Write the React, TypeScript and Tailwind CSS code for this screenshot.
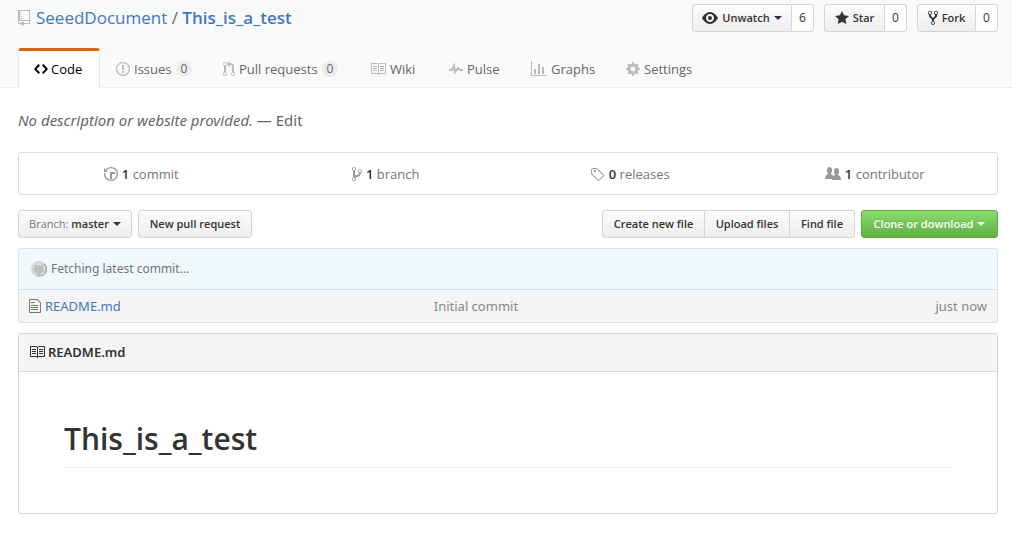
import type { ReactNode } from "react";

const ICONS = {
  repo: { w: 12, d: "M4 9H3V8h1v1zm0-3H3v1h1V6zm0-2H3v1h1V4zm0-2H3v1h1V2zm8-1v12c0 .55-.45 1-1 1H6v2l-1.5-1.5L3 16v-2H1c-.55 0-1-.45-1-1V1c0-.55.45-1 1-1h10c.55 0 1 .45 1 1zm-1 10H1v2h2v-1h3v1h5v-2zm0-10H2v9h9V1z" },
  code: { w: 14, d: "M9.5 3L8 4.5 11.5 8 8 11.5 9.5 13 14 8 9.5 3zm-5 0L0 8l4.5 5L6 11.5 2.5 8 6 4.5 4.5 3z" },
  issue: { w: 14, d: "M7 2.3c3.14 0 5.7 2.56 5.7 5.7s-2.56 5.7-5.7 5.7A5.71 5.71 0 0 1 1.3 8c0-3.14 2.56-5.7 5.7-5.7zM7 1C3.14 1 0 4.14 0 8s3.14 7 7 7 7-3.14 7-7-3.14-7-7-7zm1 3H6v5h2V4zm0 6H6v2h2v-2z" },
  pull: { w: 12, d: "M11 11.28V5c-.03-.78-.34-1.47-.94-2.06C9.46 2.35 8.78 2.03 8 2H7V0L4 3l3 3V4h1c.27.02.48.11.69.31.21.2.3.42.31.69v6.28A1.993 1.993 0 0 0 10 15a1.993 1.993 0 0 0 1-3.72zm-1 2.92c-.66 0-1.2-.55-1.2-1.2 0-.65.55-1.2 1.2-1.2.65 0 1.2.55 1.2 1.2 0 .65-.55 1.2-1.2 1.2zM4 3c0-1.11-.89-2-2-2a1.993 1.993 0 0 0-1 3.72v6.56A1.993 1.993 0 0 0 2 15a1.993 1.993 0 0 0 1-3.72V4.72c.59-.34 1-.98 1-1.72zm-.8 10c0 .66-.55 1.2-1.2 1.2-.65 0-1.2-.55-1.2-1.2 0-.65.55-1.2 1.2-1.2.65 0 1.2.55 1.2 1.2zM2 4.2C1.34 4.2.8 3.65.8 3c0-.65.55-1.2 1.2-1.2.65 0 1.2.55 1.2 1.2 0 .65-.55 1.2-1.2 1.2z" },
  book: { w: 16, d: "M3 5h4v1H3V5zm0 3h4V7H3v1zm0 2h4V9H3v1zm11-5h-4v1h4V5zm0 2h-4v1h4V7zm0 2h-4v1h4V9zm2-6v9c0 .55-.45 1-1 1H9.5l-1 1-1-1H2c-.55 0-1-.45-1-1V3c0-.55.45-1 1-1h5.5l1 1 1-1H15c.55 0 1 .45 1 1zm-8 .5L7.5 3H2v9h6V3.5zm7-.5H9.5l-.5.5V12h6V3z" },
  pulse: { w: 14, d: "M11.5 8L8.8 5.4 6.6 8.5 5.5 1.6 2.38 8H0v2h3.6l.9-1.8.9 5.4L9 8.5l1.6 1.5H14V8h-2.5z" },
  graph: { w: 16, d: "M16 14v1H0V0h1v14h15zM5 13H3V8h2v5zm4 0H7V3h2v10zm4 0h-2V6h2v7z" },
  gear: { w: 14, d: "M14 8.77v-1.600l-1.940-.64-.45-1.090.88-1.840-1.130-1.130-1.810.91-1.090-.45-.69-1.920h-1.600l-.63 1.940-1.110.45-1.840-.88-1.130 1.130.91 1.810-.45 1.090L0 7.230v1.590l1.940.64.45 1.090-.88 1.840 1.130 1.130 1.810-.91 1.090.45.69 1.920h1.590l.63-1.940 1.110-.45 1.840.88 1.130-1.130-.92-1.810.47-1.090L14 8.750v.02zM7 10.500c-1.380 0-2.500-1.120-2.500-2.500s1.120-2.500 2.500-2.500 2.500 1.120 2.500 2.500-1.120 2.500-2.500 2.500z" },
  eye: { w: 16, d: "M8.06 2C3 2 0 8 0 8s3 6 8.06 6C13 14 16 8 16 8s-3-6-7.94-6zM8 12c-2.2 0-4-1.78-4-4 0-2.2 1.8-4 4-4 2.22 0 4 1.8 4 4 0 2.22-1.78 4-4 4zm2-4c0 1.11-.89 2-2 2-1.11 0-2-.89-2-2 0-1.11.89-2 2-2 1.11 0 2 .89 2 2z" },
  star: { w: 14, d: "M14 6l-4.9-.64L7 1 4.9 5.36 0 6l3.6 3.26L2.67 14 7 11.67 11.33 14l-.93-4.74L14 6z" },
  fork: { w: 10, d: "M8 1a1.993 1.993 0 0 0-1 3.72V6L5 8 3 6V4.72A1.993 1.993 0 0 0 2 1a1.993 1.993 0 0 0-1 3.72V6.5l3 3v1.78A1.993 1.993 0 0 0 5 15a1.993 1.993 0 0 0 1-3.72V9.5l3-3V4.72A1.993 1.993 0 0 0 8 1zM2 4.2C1.34 4.2.8 3.65.8 3c0-.65.55-1.2 1.2-1.2.65 0 1.2.55 1.2 1.2 0 .65-.55 1.2-1.2 1.2zm3 10c-.66 0-1.2-.55-1.2-1.2 0-.65.55-1.2 1.2-1.2.65 0 1.2.55 1.2 1.2 0 .65-.55 1.2-1.2 1.2zm3-10c-.66 0-1.2-.55-1.2-1.2 0-.65.55-1.2 1.2-1.2.65 0 1.2.55 1.2 1.2 0 .65-.55 1.2-1.2 1.2z" },
  history: { w: 14, d: "M8 13H6V6h5v2H8v5zM7 1C4.81 1 2.87 2.02 1.59 3.59L0 2v4h4L2.5 4.5C3.55 3.17 5.17 2.3 7 2.3c3.14 0 5.7 2.56 5.7 5.7s-2.56 5.7-5.7 5.7A5.71 5.71 0 0 1 1.3 8c0-.34.03-.67.09-1H.08C.03 7.33 0 7.66 0 8c0 3.86 3.14 7 7 7s7-3.14 7-7-3.14-7-7-7z" },
  branch: { w: 10, d: "M10 5c0-1.11-.89-2-2-2a1.993 1.993 0 0 0-1 3.72v.3c-.02.52-.23.98-.63 1.38-.4.4-.86.61-1.38.63-.83.02-1.48.16-2 .45V4.72a1.993 1.993 0 0 0-1-3.72C.88 1 0 1.89 0 3a2 2 0 0 0 1 1.72v6.56c-.59.35-1 .99-1 1.72 0 1.11.89 2 2 2 1.11 0 2-.89 2-2 0-.53-.2-1-.53-1.36.09-.06.48-.41.59-.47.25-.11.56-.17.94-.17 1.05-.05 1.95-.45 2.75-1.25S8.95 7.77 9 6.73h-.02C9.59 6.37 10 5.73 10 5zM2 1.8c.66 0 1.2.55 1.2 1.2 0 .65-.55 1.2-1.2 1.2C1.35 4.2.8 3.65.8 3c0-.65.55-1.2 1.2-1.2zm0 12.41c-.66 0-1.2-.55-1.2-1.2 0-.65.55-1.2 1.2-1.2.65 0 1.2.55 1.2 1.2 0 .65-.55 1.2-1.2 1.2zm6-8c-.66 0-1.2-.55-1.2-1.2 0-.65.55-1.2 1.2-1.2.65 0 1.2.55 1.2 1.2 0 .65-.55 1.2-1.2 1.2z" },
  tag: { w: 14, d: "M6.73 2.73c-.47-.47-1.11-.73-1.77-.73H2.5C1.13 2 0 3.13 0 4.5v2.47c0 .66.27 1.3.73 1.77l6.06 6.06c.39.39 1.02.39 1.41 0l4.59-4.59a.996.996 0 0 0 0-1.41L6.73 2.73zM1.38 8.09c-.31-.3-.47-.7-.47-1.13V4.5c0-.88.72-1.59 1.59-1.59h2.47c.42 0 .83.16 1.13.47l6.14 6.13-4.73 4.73-6.13-6.15zM3 4h2v2H3V4z" },
  people: { w: 16, d: "M16 12.999c0 .439-.45 1-1 1H7.995c-.539 0-.994-.447-.995-.999H1c-.54 0-1-.561-1-1 0-2.634 3-4 3-4s.229-.409 0-1c-.841-.621-1.058-.59-1-3 .058-2.419 1.367-3 2.5-3s2.442.58 2.5 3c.058 2.41-.159 2.379-1 3-.229.59 0 1 0 1s1.549.711 2.42 2.088C9.196 9.369 10 8.999 10 8.999s.229-.409 0-1c-.841-.62-1.058-.59-1-3 .058-2.419 1.367-3 2.5-3s2.437.581 2.495 3c.059 2.41-.158 2.38-1 3-.229.59 0 1 0 1s3.005 1.366 3.005 4z" },
  file: { w: 12, d: "M6 5H2V4h4v1zM2 8h7V7H2v1zm0 2h7V9H2v1zm0 2h7v-1H2v1zm10-7.5V14c0 .55-.45 1-1 1H1c-.55 0-1-.45-1-1V2c0-.55.45-1 1-1h7.5L12 4.5zM11 5L8 2H1v12h10V5z" },
};

type IconName = keyof typeof ICONS;

function Icon({ name, className = "" }: { name: IconName; className?: string }) {
  const { w, d } = ICONS[name];
  return (
    <svg aria-hidden="true" width={w} height={16} viewBox={`0 0 ${w} 16`} fill="currentColor" className={`shrink-0 ${className}`}>
      <path fillRule="evenodd" d={d} />
    </svg>
  );
}

function Caret() {
  return <span aria-hidden="true" className="border-x-4 border-t-4 border-x-transparent border-t-current" />;
}

const BUTTON =
  "flex h-7 items-center justify-center gap-1 border border-[#d5d5d5] bg-linear-to-b from-[#fcfcfc] to-[#eeeeee] px-2 text-[11px] font-semibold whitespace-nowrap";

function SocialButton({ icon, label, count, caret, width }: { icon: IconName; label: string; count: number; caret?: boolean; width: string }) {
  return (
    <div className="flex">
      <button type="button" className={`${BUTTON} ${width} rounded-l-[3px]`}>
        <Icon name={icon} />
        {label}
        {caret && <Caret />}
      </button>
      <a href="#" className="flex h-7 min-w-[22px] items-center justify-center rounded-r-[3px] border border-l-0 border-[#d5d5d5] bg-white text-[12px] font-medium">
        {count}
      </a>
    </div>
  );
}

function Tab({ icon, label, count, width }: { icon: IconName; label: string; count?: number; width: string }) {
  return (
    <a href="#" className={`flex h-[39px] items-center gap-1 border-t-[3px] border-transparent pl-4 text-[#666] ${width}`}>
      <Icon name={icon} className="text-[#bbb]" />
      <span>{label}</span>
      {count !== undefined && (
        <span className="rounded-full bg-[#ececec] px-[5px] text-[12px] leading-4 font-medium">{count}</span>
      )}
    </a>
  );
}

function Stat({ icon, count, label }: { icon: IconName; count: number; label: string }) {
  return (
    <li className="flex flex-1 justify-center">
      <a href="#" className="flex items-center gap-1 text-[#767676]">
        <Icon name={icon} className="text-[#999]" />
        <span>
          <span className="font-semibold text-[#333]">{count}</span> {label}
        </span>
      </a>
    </li>
  );
}

function ToolButton({ children, className = "" }: { children: ReactNode; className?: string }) {
  return (
    <button type="button" className={`${BUTTON} ${className}`}>
      {children}
    </button>
  );
}

function Spinner() {
  return (
    <svg aria-hidden="true" width="16" height="16" viewBox="0 0 16 16" className="shrink-0">
      <circle cx="8" cy="8" r="7" fill="#e3e6e7" stroke="#cdcfd0" strokeWidth="1.5" />
      <path fill="#bdbfc0" d="M5.800 15.500v-3.200c-2.100-.4-3.100-1.700-3.100-4 0-1.100.3-1.900.9-2.500-.2-.9-.1-1.700.2-2.500.9 0 1.600.4 2.400.9a8 8 0 0 1 3.600 0c.8-.5 1.500-.9 2.400-.9.3.8.4 1.600.2 2.500.6.6.9 1.400.9 2.500 0 2.300-1 3.600-3.100 4v3.200z" />
      <path fill="none" stroke="#8a8c8d" d="M13.500 3A7.500 7.500 0 0 1 11 14.900" />
    </svg>
  );
}

export default function App() {
  return (
    <div className="bg-white font-['Open_Sans','Noto_Sans',sans-serif] text-[13px] leading-5 text-[#333]">
      <header className="border-b border-[#eee] bg-[#fafafa] pt-1 pr-[14px] pl-[18px]">
        <div className="flex items-start justify-between">
          <h1 className="flex items-center gap-[6px] text-[17px] leading-7 text-[#666]">
            <Icon name="repo" className="text-[#bbb]" />
            <span>
              <a href="#" className="text-[#4078c0]">SeeedDocument</a>
              {" / "}
              <a href="#" className="font-semibold text-[#4078c0]">This_is_a_test</a>
            </span>
          </h1>
          <div className="flex gap-[10px]">
            <SocialButton icon="eye" label="Unwatch" count={6} caret width="w-[100px]" />
            <SocialButton icon="star" label="Star" count={0} width="w-[61px]" />
            <SocialButton icon="fork" label="Fork" count={0} width="w-[59px]" />
          </div>
        </div>
        <nav aria-label="Repository" className="-mb-px flex pt-4">
          <a href="#" aria-current="page" className="flex h-10 w-[82px] items-center gap-[3px] rounded-t-[3px] border-x border-t-[3px] border-x-[#e5e5e5] border-t-[#d26911] bg-white pb-px pl-[15px] text-black">
            <Icon name="code" />
            Code
          </a>
          <Tab icon="issue" label="Issues" count={0} width="w-[107px]" />
          <Tab icon="pull" label="Pull requests" count={0} width="w-[147px]" />
          <Tab icon="book" label="Wiki" width="w-[79px]" />
          <Tab icon="pulse" label="Pulse" width="w-[82px]" />
          <Tab icon="graph" label="Graphs" width="w-[95px]" />
          <Tab icon="gear" label="Settings" width="w-[100px]" />
        </nav>
      </header>

      <main className="pr-[14px] pb-[22px] pl-[18px]">
        <p className="pt-[21px] pb-[21px] font-['Noto_Sans',sans-serif] text-[15px] leading-[22px] text-[#666]">
          <em>No description or website provided.</em> — <a href="#">Edit</a>
        </p>

        <ul className="flex h-[43px] items-center rounded-[3px] border border-[#ddd]">
          <Stat icon="history" count={1} label="commit" />
          <Stat icon="branch" count={1} label="branch" />
          <Stat icon="tag" count={0} label="releases" />
          <Stat icon="people" count={1} label="contributor" />
        </ul>

        <div className="flex justify-between pt-[15px] pb-[10px]">
          <div className="flex gap-[6px]">
            <ToolButton className="w-[114px] rounded-[3px]">
              <span>
                <span className="font-normal text-[#767676]">Branch:</span> master
              </span>
              <Caret />
            </ToolButton>
            <ToolButton className="w-[114px] rounded-[3px]">New pull request</ToolButton>
          </div>
          <div className="flex gap-[6px]">
            <div className="flex">
              <ToolButton className="w-[103px] rounded-l-[3px]">Create new file</ToolButton>
              <ToolButton className="w-[85px] border-l-0">Upload files</ToolButton>
              <ToolButton className="w-[65px] rounded-r-[3px] border-l-0">Find file</ToolButton>
            </div>
            <button type="button" className="flex h-7 w-[137px] items-center justify-center gap-1 rounded-[3px] border border-[#5ca941] bg-linear-to-b from-[#8add6d] to-[#60b044] text-[11px] font-semibold whitespace-nowrap text-white text-shadow-[0_-1px_0_rgb(0_0_0/0.15)]">
              Clone or download
              <Caret />
            </button>
          </div>
        </div>

        <div className="flex h-[42px] items-center gap-1 rounded-t-[3px] border border-[#c9e6f2] bg-[#f2f9fc] px-3 font-['Noto_Sans',sans-serif] text-[12px] text-[#6b7780]">
          <Spinner />
          Fetching latest commit...
        </div>
        <div className="overflow-hidden rounded-b-[3px] border border-t-0 border-[#ddd] bg-[#f5f5f5]">
          <table className="w-full table-fixed text-left font-['Noto_Sans',sans-serif] text-[#888]">
            <tbody>
              <tr className="h-8">
                <td className="w-[42%] pl-[10px]">
                  <a href="#" className="flex items-center gap-1 text-[#4078c0]">
                    <Icon name="file" className="text-[#777]" />
                    README.md
                  </a>
                </td>
                <td className="pl-1">Initial commit</td>
                <td className="w-[120px] pr-[10px] text-right">just now</td>
              </tr>
            </tbody>
          </table>
        </div>

        <section className="mt-[10px] rounded-[3px] border border-[#d8d8d8]">
          <h2 className="flex h-[38px] items-center gap-[3px] border-b border-[#d8d8d8] bg-[#f5f5f5] px-[10px] pb-px font-['Noto_Sans',sans-serif] font-semibold">
            <Icon name="book" />
            README.md
          </h2>
          <article className="p-[45px]">
            <h1 className="border-b border-[#eee] pb-[7px] text-[30px] leading-[43px] font-semibold">This_is_a_test</h1>
          </article>
        </section>
      </main>
    </div>
  );
}
